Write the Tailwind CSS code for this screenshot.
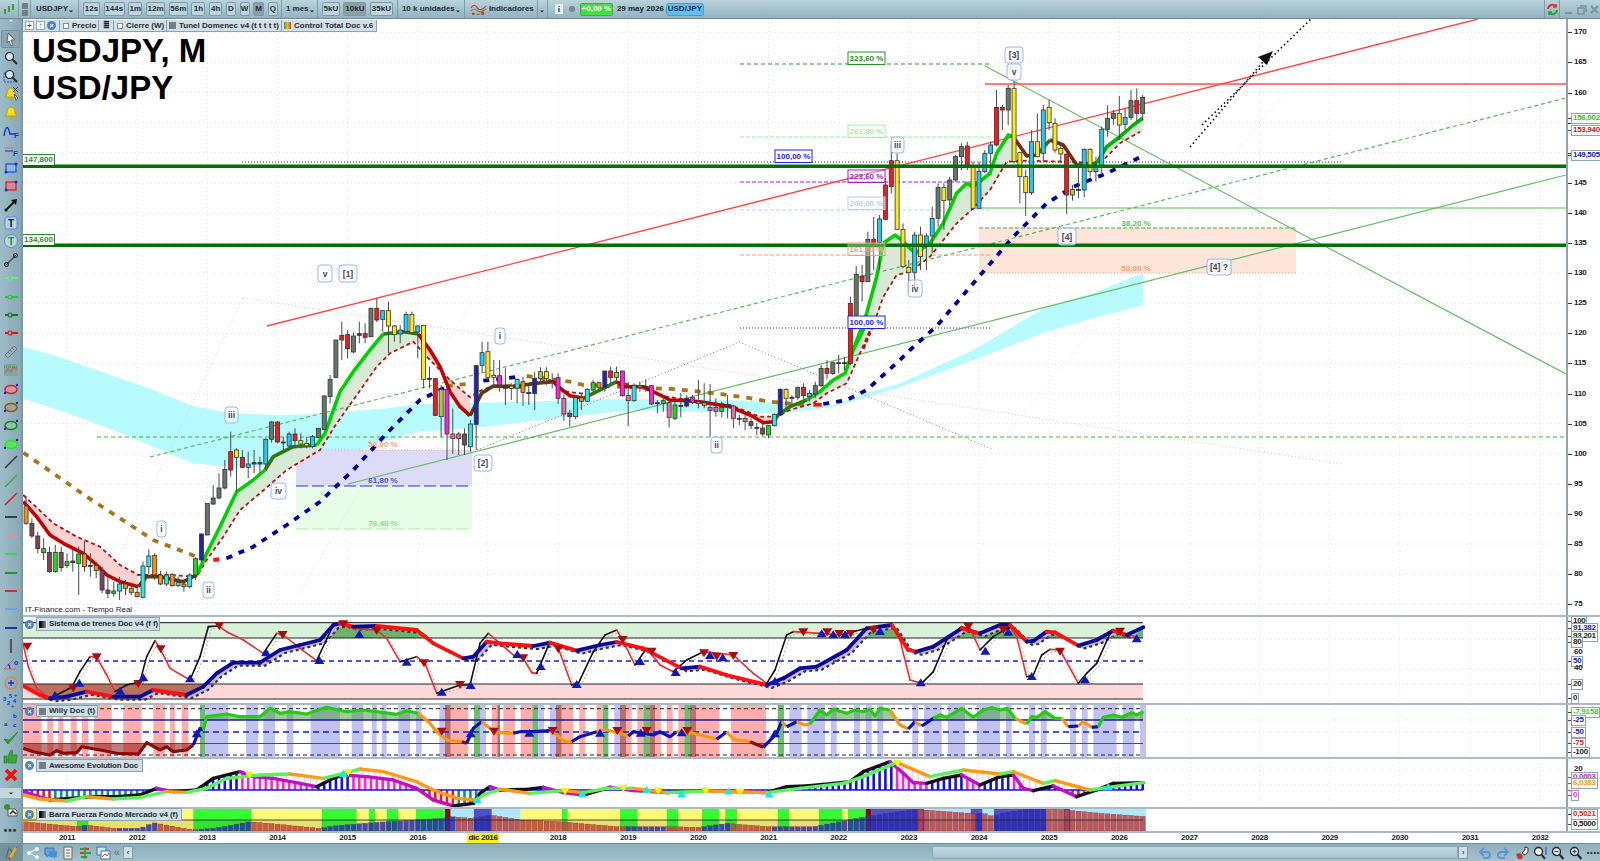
<!DOCTYPE html>
<html lang="es">
<head>
<meta charset="UTF-8">
<title>USDJPY, M</title>
<script src="https://cdn.jsdelivr.net/npm/@tailwindcss/browser@4"></script>
</head>
<body class="w-[1600px] h-[861px] overflow-hidden bg-white text-[#1f2d35] font-['Liberation_Sans',sans-serif] font-bold text-[8px] leading-none whitespace-nowrap">

<!-- top toolbar -->
<div class="h-[19px] flex items-center bg-gradient-to-b from-[#b9d3db] to-[#93b3c0] border-b border-[#6f8c99]">
  <div class="w-[19px] h-full flex items-center justify-center border-r border-[#7f9ba8]">
    <svg width="12" height="12" viewBox="0 0 12 12"><path d="M2 6v5M6 3v6M10 1v6" stroke="#3f9a3f" stroke-width="2"/></svg>
  </div>
  <div class="w-[12px] h-full flex flex-col items-center justify-center gap-[1px] border-r border-[#7f9ba8]">
    <span class="w-[6px] h-[6px] bg-[#6f8088]"></span><span class="w-[6px] h-[6px] bg-[#6f8088]"></span>
  </div>
  <div class="w-[48px] h-full flex items-center justify-between pl-[5px] pr-[4px] border-r border-[#7f9ba8]">USDJPY<span class="text-[7px]">⌄</span></div>
  <div class="flex items-center gap-[3.700px] ml-[4px] h-full">
    <span class="w-[17px] h-[14px] flex items-center justify-center rounded-[2px] border border-[#7f99a5] bg-[#bcd5dd]">12s</span>
    <span class="w-[21px] h-[14px] flex items-center justify-center rounded-[2px] border border-[#7f99a5] bg-[#bcd5dd]">144s</span>
    <span class="w-[14px] h-[14px] flex items-center justify-center rounded-[2px] border border-[#7f99a5] bg-[#bcd5dd]">1m</span>
    <span class="w-[19px] h-[14px] flex items-center justify-center rounded-[2px] border border-[#7f99a5] bg-[#bcd5dd]">12m</span>
    <span class="w-[19px] h-[14px] flex items-center justify-center rounded-[2px] border border-[#7f99a5] bg-[#bcd5dd]">56m</span>
    <span class="w-[14px] h-[14px] flex items-center justify-center rounded-[2px] border border-[#7f99a5] bg-[#bcd5dd]">1h</span>
    <span class="w-[13px] h-[14px] flex items-center justify-center rounded-[2px] border border-[#7f99a5] bg-[#bcd5dd]">4h</span>
    <span class="w-[10px] h-[14px] flex items-center justify-center rounded-[2px] border border-[#7f99a5] bg-[#bcd5dd]">D</span>
    <span class="w-[10px] h-[14px] flex items-center justify-center rounded-[2px] border border-[#7f99a5] bg-[#bcd5dd]">W</span>
    <span class="w-[11px] h-[14px] flex items-center justify-center rounded-[2px] border border-[#7f99a5] bg-[#8d9ea6]">M</span>
    <span class="w-[10px] h-[14px] flex items-center justify-center rounded-[2px] border border-[#7f99a5] bg-[#bcd5dd]">Q</span>
  </div>
  <div class="w-[37px] h-full ml-[3px] flex items-center justify-between pl-[4px] pr-[4px] border-x border-[#7f9ba8]">1 mes<span class="text-[7px]">⌄</span></div>
  <div class="flex items-center gap-[3.500px] ml-[4px] h-full">
    <span class="w-[18px] h-[14px] flex items-center justify-center rounded-[2px] border border-[#7f99a5] bg-[#bcd5dd]">5kU</span>
    <span class="w-[23px] h-[14px] flex items-center justify-center rounded-[2px] border border-[#7f99a5] bg-[#8d9ea6]">10kU</span>
    <span class="w-[23px] h-[14px] flex items-center justify-center rounded-[2px] border border-[#7f99a5] bg-[#bcd5dd]">35kU</span>
  </div>
  <div class="w-[68px] h-full ml-[4px] flex items-center justify-between pl-[4px] pr-[4px] border-x border-[#7f9ba8]">10 k unidades<span class="text-[7px]">⌄</span></div>
  <svg class="ml-[5px]" width="17" height="15" viewBox="0 0 18 15"><path d="M1 6c3-5 5-3 7 0s5 2 9-2" fill="none" stroke="#e03030" stroke-width="1.200"/><path d="M1 9c3-3 5-2 7 0s5 1 9-2" fill="none" stroke="#30b030" stroke-width="1.200"/><path d="M2 13v-2h3v2zM7 13v-1h3v1zM12 13v-3h3v3z" fill="#d03030"/></svg>
  <div class="w-[50px] pl-[2px]">Indicadores</div>
  <div class="w-[11px] h-full flex items-center justify-center border-x border-[#7f9ba8] text-[7px]">⌄</div>
  <svg class="ml-[7px]" width="8" height="10" viewBox="0 0 8 10"><path d="M0 0h8v10H0z" fill="#e4edf0"/><path d="M3 2h2v1H3zM3 4h2v4H3z" fill="#6a7c84"/></svg>
  <span class="ml-[6px] w-[6px] h-[6px] rounded-full bg-[#75878f]"></span>
  <span class="ml-[5px] w-[33px] h-[13px] flex items-center justify-center rounded-[2px] bg-[#45dc45] border border-[#3fb03f] text-white">+0,00 %</span>
  <span class="ml-[4px] w-[45px] text-[#1a242a]">29 may 2026</span>
  <span class="ml-[4px] w-[38px] h-[13px] flex items-center justify-center rounded-[3px] bg-[#66bdec] text-[#0e3560] border border-[#4a9ccf]">USD/JPY</span>
  <div class="ml-auto h-full flex items-center">
    <div class="w-[16px] h-full flex items-center justify-center border-x border-[#7f9ba8]">
      <svg width="13" height="13" viewBox="0 0 13 13"><path d="M2 6a4.500 4.500 0 0 1 8-2.500" fill="none" stroke="#e03030" stroke-width="2"/><path d="M10 1v3H7" fill="none" stroke="#e03030" stroke-width="1.500"/><path d="M11 7a4.500 4.500 0 0 1-8 2.500" fill="none" stroke="#20a040" stroke-width="2"/><path d="M3 12V9h3" fill="none" stroke="#20a040" stroke-width="1.500"/></svg>
    </div>
    <svg width="40" height="12" viewBox="0 0 40 12"><path d="M5 10h7" stroke="#7c919a" stroke-width="2"/><path d="M18 5h6v6h-6zM20 3h6v6" fill="none" stroke="#7c919a" stroke-width="1.500"/><path d="M31 3l7 7M38 3l-7 7" stroke="#7c919a" stroke-width="2"/></svg>
  </div>
</div>

<div class="flex h-[824px]">
  <!-- left drawing toolbar -->
  <div class="w-[23px] shrink-0 bg-gradient-to-r from-[#9dbcc8] to-[#87a8b5] border-r-2 border-[#7d98a4] flex flex-col items-center overflow-hidden">
    <div class="h-[11px] w-full text-center text-[7px] text-[#e8f2f5]">⌃</div>
    <div id="tools" class="h-[758px] overflow-hidden flex flex-col items-center w-full"></div>
    <div class="h-[10px] w-full shrink-0 bg-[#c1d6dd] text-center text-[7px]">⌄</div>
    <svg class="mt-[5px]" width="16" height="16" viewBox="0 0 16 16"><circle cx="4" cy="4" r="3" fill="#2e9a2e"/><path d="M5 6h7l2 2v5H5z" fill="#eef3f5" stroke="#555"/><path d="M7 11l3-3 3 3" fill="none" stroke="#222" stroke-width="1.500"/></svg>
    <span class="mt-[7px] text-[10px] font-bold tracking-[1px] text-[#333]">•••</span>
  </div>

  <div class="flex-1 flex flex-col">
    <!-- main chart -->
    <div class="h-[596px] flex">
      <div class="relative w-[1543px]">
        <svg id="main" width="1543" height="596" viewBox="23 19 1543 596" class="block"></svg>
        <div class="absolute left-0 top-[1px] h-[12px] flex bg-[#d2e0e5] border-r border-b border-[#8aa3ae]">
          <div class="w-[36px] flex items-center gap-[2px] pl-[2px]">
            <span class="w-[9px] h-[9px] flex items-center justify-center bg-white border border-[#9ab] text-[#e02020]">+</span>
            <span class="w-[9px] h-[9px] flex items-center justify-center bg-white border border-[#9ab] text-[#20a020]">↑</span>
            <span class="w-[9px] h-[9px] flex items-center justify-center rounded-full bg-[#4f7fc4] text-white text-[7px]">×</span>
          </div>
          <div class="w-[39px] flex items-center gap-[3px] pl-[3px] border-l border-[#8aa3ae]"><span class="w-[6px] h-[6px] shrink-0 border border-[#7d8f97] bg-white"></span>Precio</div>
          <div class="w-[15px] flex items-center justify-center border-l border-[#8aa3ae]">≣</div>
          <div class="w-[53px] flex items-center gap-[3px] pl-[3px] border-l border-[#8aa3ae]"><span class="w-[6px] h-[6px] shrink-0 border border-[#7d8f97] bg-white"></span>Cierre (W)</div>
          <div class="w-[115px] flex items-center gap-[3px] pl-[2px] border-l border-[#8aa3ae]"><span class="w-[7px] h-[7px] shrink-0 bg-[#6f8088]"></span>Tunel Domenec v4 (t t t t t)</div>
          <div class="w-[95px] flex items-center gap-[3px] pl-[2px] border-l border-[#8aa3ae]">
            <span class="w-[7px] h-[7px] shrink-0 bg-gradient-to-r from-[#30a030] via-[#e0c020] to-[#e03030]"></span>Control Total Doc v.6</div>
        </div>
        <div class="absolute left-[9px] top-[14px] font-bold text-[33px] leading-[36.500px] text-black">USDJPY, M<br>USD/JPY</div>
        <div class="absolute left-0 top-[135px] w-[32px] h-[11px] bg-white border-t border-r border-[#2a8a2a] text-[#1f8f1f] flex items-center justify-center">147,800</div>
        <div class="absolute left-0 top-[215px] w-[32px] h-[11px] bg-white border-t border-r border-[#2a8a2a] text-[#1f8f1f] flex items-center justify-center">134,600</div>
        <div class="absolute left-[2px] bottom-[1px] text-[8px] font-normal text-[#222]">IT-Finance.com - Tiempo Real</div>
      </div>
      <div id="ax0" class="relative w-[34px] border-l-2 border-[#8fa6b0]"></div>
    </div>

    <!-- Sistema de trenes -->
    <div class="h-[88px] flex border-t-2 border-[#a9bcc4]">
      <div class="relative w-[1543px]">
        <svg id="p1" width="1543" height="86" viewBox="23 617 1543 86" class="block"></svg>
        <div class="absolute left-0 top-0 h-[14px] flex items-center gap-[2px] pl-[2px]">
          <span class="w-[9px] h-[9px] flex items-center justify-center rounded-full bg-[#4f7fc4] text-white text-[7px]">×</span>
          <div class="h-[14px] w-[124px] flex items-center gap-[3px] pl-[2px] bg-[#d2e0e5] border border-[#8aa3ae] tracking-[-0.1px]"><span class="w-[7px] h-[7px] shrink-0 bg-gradient-to-r from-black to-[#8a9aa2]"></span>Sistema de trenes Doc v4 (f f)</div>
        </div>
      </div>
      <div id="ax1" class="relative w-[34px] border-l-2 border-[#8fa6b0]"></div>
    </div>

    <!-- Willy -->
    <div class="h-[54px] flex border-t-2 border-[#a9bcc4]">
      <div class="relative w-[1543px]">
        <svg id="p2" width="1543" height="52" viewBox="23 705 1543 52" class="block"></svg>
        <div class="absolute left-0 top-0 h-[12px] flex items-center gap-[2px] pl-[2px]">
          <span class="w-[9px] h-[9px] flex items-center justify-center rounded-full bg-[#4f7fc4] text-white text-[7px]">×</span>
          <div class="h-[12px] w-[62px] flex items-center gap-[3px] pl-[2px] bg-[#d2e0e5] border border-[#8aa3ae]"><span class="w-[7px] h-[7px] shrink-0 bg-[#6f8088]"></span>Willy Doc (t)</div>
        </div>
      </div>
      <div id="ax2" class="relative w-[34px] border-l-2 border-[#8fa6b0]"></div>
    </div>

    <!-- Awesome -->
    <div class="h-[50px] flex border-t-2 border-[#a9bcc4]">
      <div class="relative w-[1543px]">
        <svg id="p3" width="1543" height="48" viewBox="23 759 1543 48" class="block"></svg>
        <div class="absolute left-0 top-0 h-[13px] flex items-center gap-[2px] pl-[2px]">
          <span class="w-[9px] h-[9px] flex items-center justify-center rounded-full bg-[#4f7fc4] text-white text-[7px]">×</span>
          <div class="h-[13px] w-[107px] flex items-center gap-[3px] pl-[2px] bg-[#d2e0e5] border border-[#8aa3ae] tracking-[-0.2px]"><span class="w-[7px] h-[7px] shrink-0 bg-[#6f8088]"></span>Awesome Evolution Doc</div>
        </div>
      </div>
      <div id="ax3" class="relative w-[34px] border-l-2 border-[#8fa6b0]"></div>
    </div>

    <!-- Barra fuerza -->
    <div class="h-[24px] flex border-t-2 border-[#a9bcc4]">
      <div class="relative w-[1543px]">
        <svg id="p4" width="1543" height="22" viewBox="23 809 1543 22" class="block"></svg>
        <div class="absolute left-0 -top-[1px] h-[13px] flex items-center gap-[2px] pl-[2px]">
          <span class="w-[9px] h-[9px] flex items-center justify-center rounded-full bg-[#4f7fc4] text-white text-[7px]">×</span>
          <div class="h-[13px] w-[146px] flex items-center gap-[3px] pl-[2px] bg-[#d2e0e5] border border-[#8aa3ae] tracking-[-0.1px]"><span class="w-[7px] h-[7px] shrink-0 bg-gradient-to-r from-black to-[#8a9aa2]"></span>Barra Fuerza Fondo Mercado v4 (f)</div>
        </div>
      </div>
      <div id="ax4" class="relative w-[34px] border-l-2 border-[#8fa6b0]"></div>
    </div>

    <!-- time axis -->
    <div id="time" class="relative h-[12px] border-t-2 border-[#a9bcc4] tracking-[-0.3px]">
      <span class="absolute left-[444px] top-[0px] w-[32px] h-[10px] flex items-center justify-center bg-[#f7f01e] text-[#111]">dic 2016</span>
    </div>
  </div>
</div>

<!-- bottom bar -->
<div class="h-[18px] flex items-center bg-gradient-to-b from-[#8fb0bd] to-[#a4c2cd] border-t border-[#6f8c99]">
  <div class="w-[23px] h-full flex items-center justify-center bg-[#74929e]">
    <svg width="15" height="15" viewBox="0 0 15 15"><path d="M2 13L5 3l5 6 3-7" fill="none" stroke="#5a6a70" stroke-width="1.200"/><path d="M6 13l6-10" stroke="#e8b010" stroke-width="2.500"/><path d="M5 14l1-1" stroke="#d02020" stroke-width="2"/></svg>
  </div>
  <svg class="ml-[3px]" width="14" height="14" viewBox="0 0 14 14"><path d="M3 7l8-4M3 7l8 4" stroke="#f4f8fa" stroke-width="1.200"/><circle cx="3" cy="7" r="2" fill="#f4f8fa"/><circle cx="11" cy="3" r="2" fill="#f4f8fa"/><circle cx="11" cy="11" r="2" fill="#f4f8fa"/></svg>
  <svg class="ml-[4px]" width="14" height="14" viewBox="0 0 14 14"><path d="M1 2h9v7H5l-2 2V9H1z" fill="#6f9ed8" stroke="#3d6fb0"/><path d="M5 5h8v6h-2v2l-2-2H5z" fill="#3f8fe0"/></svg>
  <svg class="ml-[3px]" width="14" height="14" viewBox="0 0 14 14"><path d="M3 1h8v12H3z" fill="#f2f2f2" stroke="#666"/><path d="M5 4h4M5 7h4" stroke="#d03030"/><path d="M5 10h4" stroke="#30a030"/></svg>
  <svg class="ml-[3px]" width="14" height="14" viewBox="0 0 14 14"><path d="M7 1v12" stroke="#555"/><path d="M2 2h6v2H2zM6 6h7v2H6zM3 10h6v2H3z" fill="#2ea02e"/><path d="M8 2h3v2H8zM2 6h4v2H2z" fill="#e03030"/></svg>
  <svg class="ml-[4px]" width="15" height="14" viewBox="0 0 15 14"><path d="M1 1h9v8H1z" fill="#cfe3f5" stroke="#3d6fb0"/><path d="M5 5h9v8H5z" fill="#fff" stroke="#3d6fb0"/><path d="M6 11l3-3 2 2 2-3" fill="none" stroke="#e03030"/></svg>
  <span class="ml-[3px] text-[11px] font-normal text-[#5a7480]">«</span>
  <span class="ml-[3px] w-[10px] h-[13px] flex items-center justify-center bg-[#cfe0e6] border border-[#7f99a5] text-[7px]">‹</span>
  <div class="w-[802px] h-[13px] bg-gradient-to-b from-[#8caebb] to-[#9fbfca]"></div>
  <div class="w-[528px] h-[13px] rounded-[2px] bg-gradient-to-b from-[#c3dae1] to-[#a6c4ce] border border-[#8aa7b2]"></div>
  <span class="w-[10px] h-[13px] flex items-center justify-center bg-[#cfe0e6] border border-[#7f99a5] text-[7px]">›</span>
  <svg class="ml-[10px]" width="14" height="14" viewBox="0 0 14 14"><path d="M3 6h6a3 3 0 0 1 0 6H5" fill="none" stroke="#5b95d8" stroke-width="2"/><path d="M6 2L2 6l4 4" fill="none" stroke="#5b95d8" stroke-width="2"/></svg>
  <svg class="ml-[4px]" width="14" height="14" viewBox="0 0 14 14"><path d="M11 6H5a3 3 0 0 0 0 6h4" fill="none" stroke="#5b95d8" stroke-width="2"/><path d="M8 2l4 4-4 4" fill="none" stroke="#5b95d8" stroke-width="2"/></svg>
  <svg class="ml-[5px]" width="14" height="14" viewBox="0 0 14 14"><path d="M1 8l4-1 3 3-1 3H3z" fill="#d03030"/><path d="M7 7l3-3V1l3 1v4l-3 3z" fill="#fff" stroke="#333"/></svg>
  <svg class="ml-[4px]" width="15" height="14" viewBox="0 0 15 14"><circle cx="5.500" cy="5.500" r="4" fill="#eef4f7" stroke="#222" stroke-width="1.300"/><path d="M8.500 8.500L12 13" stroke="#222" stroke-width="2"/><path d="M13 1v8" stroke="#2040c0"/></svg>
  <svg class="ml-[3px]" width="14" height="14" viewBox="0 0 14 14"><circle cx="5.500" cy="5.500" r="4" fill="#eef4f7" stroke="#222" stroke-width="1.300"/><path d="M8.500 8.500L12.500 13" stroke="#222" stroke-width="2"/><path d="M3.500 5.500h4" stroke="#2040c0" stroke-width="1.300"/></svg>
  <svg class="ml-[4px]" width="14" height="14" viewBox="0 0 14 14"><circle cx="5.500" cy="5.500" r="4" fill="#eef4f7" stroke="#222" stroke-width="1.300"/><path d="M8.500 8.500L12.500 13" stroke="#222" stroke-width="2"/><path d="M3.500 5.500h4M5.500 3.500v4" stroke="#2040c0" stroke-width="1.300"/></svg>
  <span class="ml-[4px] text-[8px] tracking-[0.5px] text-[#333]">••••</span>
</div>

<script>
const at = (x0, y0, f) => { const r = []; for (let i = 0; i < f.length; i += 2) r.push([x0 + f[i] / 3, y0 + f[i + 1] / 3]); return r };
const Z7 = f => at(20, 260, f), Z11 = f => at(500, 330, f), Z8 = f => at(800, 30, f);
const Z6 = f => at(0, 600, f), Z9 = f => at(500, 600, f), Z10 = f => at(1000, 600, f);
const pts = p => p.map(q => q[0].toFixed(1) + ',' + q[1].toFixed(1)).join(' ');
const line = (p, c, w, dash, extra) => `<polyline points="${pts(p)}" fill="none" stroke="${c}" stroke-width="${w}" stroke-linejoin="round" ${dash ? `stroke-dasharray="${dash}"` : ''} ${extra || ''}/>`;
const poly = (p, c, extra) => `<polygon points="${pts(p)}" fill="${c}" ${extra || ''}/>`;
const rect = (x, y, w, h, c, extra) => `<rect x="${x}" y="${y}" width="${w}" height="${h}" fill="${c}" ${extra || ''}/>`;
const seg = (x1, y1, x2, y2, c, w, dash) => line([[x1, y1], [x2, y2]], c, w, dash);
const tx = m => 67 + 5.846 * m;
const yearX = y => 67 + 70.15 * (y - 2011);
const py = p => 32.3 + (170 - p) * 6.02;
const FONT = 'font-family="Liberation Sans, sans-serif"';

function grid(top, bottom, hs) {
  let s = '';
  for (let y = 2011; y <= 2032; y++) s += seg(yearX(y), top, yearX(y), bottom, '#dfe3e5', 1, '1 3');
  hs.forEach(h => s += seg(23, h, 1566, h, '#dfe3e5', 1, '1 3'));
  return s;
}

// candles: wick top, body top, body bottom, wick bottom, colour (reference crops, y in 3x units)
const COL = { g: '#66766a', m: '#7c4658', y: '#ffe81a', c: '#27c8ee', r: '#f01c1c', G: '#22d822', o: '#f09412', p: '#ee6aa6', M: '#ff22d4', b: '#2424a8', d: '#3c3c3c', O: '#a4cc44', a: '#2ee6e6' };
const c7 = [[710,738,790,795,'o'],[775,790,828,835,'m'],[815,828,866,880,'m'],[835,866,878,900,'G'],[860,877,935,938,'m'],[855,877,935,938,'G'],[860,877,923,935,'m'],[880,905,917,925,'G'],[870,903,908,935,'d'],[860,882,910,1005,'G'],[842,882,920,935,'o'],[880,916,918,950,'d'],[905,917,932,955,'o'],[920,932,990,1000,'m'],[945,990,1000,1015,'m'],[965,993,1000,1010,'G'],[950,972,993,1020,'a'],[960,972,985,1005,'o'],[975,985,997,1005,'o'],[985,997,1010,1012,'o'],[905,918,1012,1015,'a'],[868,888,920,950,'a'],[880,886,945,960,'o'],[932,945,972,975,'o'],[935,945,972,978,'a'],[940,943,977,980,'o'],[950,968,977,982,'a'],[960,972,980,995,'o'],[940,945,980,985,'a'],[892,896,945,960,'G'],[820,822,900,905,'b'],[730,730,825,825,'g'],[675,714,732,735,'g'],[640,684,714,718,'g'],[600,628,684,688,'g'],[515,575,630,650,'r'],[565,570,592,695,'y'],[570,592,622,625,'r'],[575,612,622,655,'c'],[570,608,612,640,'d'],[590,608,612,640,'d'],[535,538,612,625,'c'],[483,486,538,548,'g'],[483,486,546,550,'r'],[530,546,548,570,'d'],[515,522,558,570,'c'],[505,522,542,565,'r'],[520,542,552,565,'y'],[530,550,558,565,'y'],[525,530,560,565,'c'],[505,505,532,535,'g'],[405,408,508,510,'g'],[345,358,410,430,'g'],[240,240,352,355,'g'],[185,226,240,300,'r'],[210,224,266,295,'r'],[218,228,276,280,'g'],[185,221,226,250,'d'],[190,221,232,250,'r'],[143,145,230,232,'g'],[115,145,180,186,'r'],[150,152,178,215,'c'],[125,152,198,280,'y'],[195,198,224,245,'y'],[195,210,222,250,'c'],[155,163,215,220,'c'],[155,163,218,222,'y'],[195,198,216,295,'c'],[196,196,358,385,'y'],[320,355,358,385,'d'],[355,356,466,468,'r'],[375,388,470,530,'O'],[375,388,522,600,'M'],[445,522,535,582,'p'],[515,522,535,585,'p'],[505,522,555,585,'m'],[480,492,560,575,'a'],[315,317,493,570,'b'],[245,278,316,340,'c'],[245,275,352,360,'y'],[300,346,352,385,'y'],[300,347,375,395,'M'],[325,376,385,435,'d'],[370,378,385,420,'y'],[355,358,385,430,'a']];
const c11 = [[140,155,187,228,'o'],[165,187,191,225,'d'],[125,145,191,240,'b'],[112,125,145,160,'O'],[112,125,145,165,'y'],[130,152,155,175,'d'],[130,143,205,222,'M'],[195,205,252,272,'p'],[240,250,260,290,'m'],[195,203,260,268,'a'],[190,203,214,240,'o'],[175,178,214,216,'a'],[150,158,180,190,'G'],[155,158,172,185,'o'],[123,123,172,185,'b'],[110,123,142,165,'r'],[110,127,142,155,'O'],[123,123,197,200,'M'],[155,196,212,288,'p'],[160,167,212,215,'a'],[155,167,173,185,'o'],[148,170,173,185,'b'],[165,167,222,225,'M'],[210,218,220,250,'d'],[195,212,220,245,'G'],[210,218,262,292,'p'],[215,225,265,270,'G'],[190,226,228,262,'d'],[195,205,228,232,'b'],[195,203,217,222,'M'],[150,214,220,235,'p'],[160,218,226,235,'o'],[162,232,241,320,'p'],[205,232,244,260,'p'],[215,232,244,262,'G'],[195,224,230,265,'d'],[225,228,265,295,'p'],[255,265,267,285,'d'],[255,265,275,300,'p'],[265,275,287,298,'m'],[278,292,294,315,'d'],[280,294,312,318,'m'],[285,287,315,325,'G'],[250,253,287,290,'a'],[175,178,255,257,'b'],[175,178,205,240,'y'],[195,202,204,225,'d'],[170,172,202,210,'g'],[160,172,197,210,'r'],[180,190,200,215,'c'],[155,167,192,205,'g'],[105,115,167,170,'g'],[90,115,130,145,'r'],[95,98,130,135,'g'],[75,98,100,130,'d'],[80,98,100,120,'d']];
const c8 = [[800,820,1000,1005,'r'],[708,733,855,870,'g'],[705,738,755,815,'r'],[605,628,755,755,'g'],[560,628,640,720,'r'],[555,567,637,720,'c'],[445,465,568,570,'r'],[335,392,470,490,'r'],[370,392,598,600,'y'],[580,598,710,715,'y'],[690,712,727,790,'y'],[605,615,727,770,'c'],[590,615,680,720,'y'],[610,618,648,720,'c'],[530,565,618,670,'c'],[460,472,565,590,'g'],[460,472,512,600,'y'],[440,450,510,525,'g'],[375,380,450,455,'g'],[340,350,380,420,'g'],[335,348,405,420,'r'],[395,410,535,540,'y'],[395,424,535,535,'c'],[360,370,425,430,'c'],[335,345,370,405,'c'],[180,232,345,350,'r'],[225,232,240,300,'r'],[165,175,240,285,'g'],[155,175,395,400,'y'],[365,368,440,520,'y'],[420,440,488,558,'y'],[300,335,488,495,'c'],[250,335,380,382,'y'],[225,240,370,395,'c'],[210,232,278,300,'y'],[265,280,360,368,'y'],[335,355,372,400,'y'],[372,372,495,552,'r'],[465,478,495,512,'O'],[410,478,480,505,'d'],[355,358,480,502,'c'],[355,358,425,440,'y'],[380,412,425,455,'c'],[290,298,410,430,'c'],[225,265,298,320,'g'],[240,250,265,285,'g'],[198,250,285,330,'y'],[235,262,283,300,'c'],[180,212,262,270,'g'],[175,212,250,275,'r'],[195,202,250,272,'g']];
const candles = [...c7.map(c => [260, c]), ...c11.map(c => [330, c]), ...c8.map(c => [30, c])];
let candleSvg = '';
candles.forEach(([y0, c], i) => {
  const m = i - 7, x = tx(m), Y = v => y0 + v / 3;
  candleSvg += seg(x, Y(c[0]), x, Y(c[3]), '#4a4a4a', 1);
  candleSvg += rect(x - 2, Y(c[1]), 4, Math.max(Y(c[2]) - Y(c[1]), 1), COL[c[4]], 'stroke="#333" stroke-width="0.8"');
});

// moving averages
const maA1 = Z7([10,725,50,770,90,825,130,850,190,880,230,915,260,945,300,965,355,980]);
const maA2 = Z7([355,980,380,950,420,950,490,965,530,945]);
const maA3 = Z7([530,945,560,880,600,800,650,695,700,660,735,630]);
const maA4 = Z7([735,630,760,590,820,560,890,555]);
const maA5 = Z7([890,555,915,520,960,395,1000,335,1050,270,1090,222]);
const maA6 = Z7([1090,222,1150,215,1195,222]);
const maA7 = Z7([1195,222,1230,270,1260,320,1290,395,1320,440,1350,467]);
const maA8 = Z7([1350,467,1385,400,1420,378,1500,380]).concat(Z11([50,168,110,160,160,155]));
const maB1 = Z11([160,155,180,175,210,197,250,205]);
const maB2 = Z11([250,205,280,190,350,155]);
const maB3 = Z11([350,155,370,170,430,170,470,190,510,210,560,212,600,215,690,230,760,260,790,278,820,275]);
const maB4 = Z11([820,275,835,255,870,230,920,210]);
const maB5 = Z11([920,210,960,185,1000,150,1035,130,1060,60,1090,0]).concat(Z8([160,960,200,850,230,740,250,640]));
const maB6 = Z8([250,640,285,615,305,630,345,670]);
const maB7 = Z8([345,670,390,640,430,580,470,490,500,460,520,470,570,430,590,370,625,315,640,320]);
const maB8 = Z8([640,320,680,378,710,375]);
const maB9 = Z8([710,375,750,330]);
const maB10 = Z8([750,330,790,345,830,405]);
const maB11 = Z8([830,405,890,400]);
const maB12 = Z8([890,400,920,350,960,320,1000,285,1028,265]);
const sig = Z7([10,705,100,790,170,830,240,860,300,915,355,945,440,945,530,950,560,900,610,830,660,750,720,700,800,630,900,570,950,490,1000,420,1070,320,1110,280,1180,245,1220,290,1290,360,1350,412,1385,390,1420,378])
  .concat(Z11([60,165,150,150,200,185,240,190,280,190,350,155,420,172,500,200,600,215,690,225,780,260,830,260,870,240,940,220,980,190,1040,160,1080,70,1110,0]))
  .concat(Z8([190,960,215,900,250,800,290,735,330,725,390,680,470,580,520,535,570,480,620,395,680,392,800,395,900,400,960,340,1020,305]));
const GREENFILL = '#d6ead6', PINKFILL = '#fbd2d2';
const between = (a, b, c) => poly(a.concat(b.slice().reverse()), c);

let mainSvg = grid(19, 615, Array.from({ length: 20 }, (_, i) => py(170 - i * 5)));
// cyan band
mainSvg += poly(
  Z7([-9,255,100,285,200,320,300,355,400,390,460,415,520,438,620,458,760,465,900,462,1100,445,1200,432,1500,425])
  .concat(Z11([300,208,600,208,830,215,1000,226,1100,190,1200,160]))
  .concat(Z8([520,960,740,830,880,790,1030,728,1030,825,880,865,740,905,600,960]))
  .concat(Z11([1200,172,1100,202,1000,230,850,250,600,245,400,240,200,262,0,285]))
  .concat(Z7([1360,505,1200,515,1100,540,1000,580,900,605,760,620,620,620,520,610,400,560,300,518,200,480,100,445,-9,410])), '#b8fbff');
// fibo boxes
mainSvg += rect(979, 228, 317, 45, '#fde5da');
mainSvg += rect(296, 450, 176, 36, '#dcdcf8') + rect(296, 486, 176, 43, '#e8fde8');
mainSvg += seg(979, 228, 1296, 228, '#40b040', 1, '4 2') + seg(979, 273, 1296, 273, '#f8a080', 1, '1 2');
mainSvg += seg(296, 450, 472, 450, '#f8a080', 1, '1 2') + seg(296, 486, 472, 486, '#3030d0', 1, '12 4') + seg(296, 529, 472, 529, '#a0f0a0', 1.2, '12 4');
// long fibo levels
mainSvg += seg(740, 64, 990, 64, '#2f9a2f', 1.2, '4 3') + seg(740, 137, 990, 137, '#90ee90', 1, '4 2') + seg(740, 182, 990, 182, '#a020f0', 1, '4 2')
  + seg(740, 210, 990, 210, '#b8d0ff', 1, '4 2') + seg(740, 255, 990, 255, '#ff9966', 1, '4 2') + seg(740, 328, 990, 328, '#2020ff', 1, '1 2')
  + seg(242, 162, 1342, 162, '#2020d0', 1, '1 2');
// gray dotted waves
const grayDots = [[[243,298],[1342,464],'#c8c8c8'],[[243,298],[117,560],'#d8d8d8'],[[297,597],[472,300],'#e0e0e0'],[[477,450],[739,342],'#707070'],[[739,342],[992,449],'#808080'],[[980,467],[1286,92],'#e4e4e4']];
grayDots.forEach(d => mainSvg += seg(d[0][0], d[0][1], d[1][0], d[1][1], d[2], 1, '1 2.5'));
// fills between the averages and their signal
mainSvg += between(maA1, Z7([10,705,100,790,170,830,240,860,300,915,355,945]), PINKFILL);
mainSvg += between(maA3.concat(maA4, maA5, maA6), Z7([530,950,560,900,610,830,660,750,720,700,800,630,900,570,950,490,1000,420,1070,320,1110,280,1195,245]), GREENFILL);
mainSvg += between(maA7, Z7([1195,245,1220,290,1290,360,1350,412]), PINKFILL);
mainSvg += between(maB3, Z11([350,155,420,172,500,200,600,215,690,225,780,260,820,262]), PINKFILL);
mainSvg += between(maB4.concat(maB5, maB6, maB7), Z11([820,262,870,240,940,220,980,190,1040,160,1080,70,1110,0]).concat(Z8([190,960,215,900,250,800,290,735,330,725,390,680,470,580,520,535,570,480,620,395,640,390])), GREENFILL);
mainSvg += between(maB12, Z8([890,400,960,340,1028,305]), GREENFILL);
// trend lines
mainSvg += seg(267, 326, 1478, 19, '#ff4444', 1.3);
mainSvg += seg(150, 457, 1566, 98, '#55bb55', 1.2, '4 3');
mainSvg += seg(348, 484, 1566, 175, '#66bb66', 1.2);
mainSvg += seg(985, 66, 1566, 374, '#66bb66', 1.2);
mainSvg += seg(980, 208, 1566, 208, '#55bb55', 1);
mainSvg += seg(97, 437, 1566, 437, '#33bb33', 1, '4 3');
mainSvg += seg(985, 84, 1566, 84, '#ff5050', 1.4);
// long-term dashed average
const blue = '#00009a', brown = '#a8741a', DW = 3.8, DASH = '6 7';
mainSvg += line(Z7([10,578,100,640,200,710,300,775,400,840,530,890]), brown, DW, DASH);
mainSvg += line(Z7([580,900,620,895]), '#ff1010', DW, DASH);
mainSvg += line(Z7([620,895,700,860,800,795,900,725,1000,630,1100,520,1200,420,1280,380]), blue, DW, DASH);
mainSvg += line(Z7([1280,378,1340,372]), brown, DW, DASH);
mainSvg += line(Z7([1390,362,1500,350]), blue, DW, DASH);
mainSvg += line(Z11([80,138,210,155,250,165,530,178,570,182,600,185,670,193,740,203,810,215,880,222,930,225]), brown, DW, DASH);
mainSvg += line(Z11([940,224,965,224]), '#ff1010', DW);
mainSvg += line(Z11([970,222,1040,210,1100,180,1150,135,1200,90]).concat(Z8([330,960,410,888,520,760,640,620,740,520,820,470,920,430,1020,382])), blue, DW, DASH);
// signal dashed
mainSvg += line(sig, '#b01414', 1.8, '4 3');
// thick average pieces
const THICK = 3.6, R = '#c00000', G1 = '#00d000', DG = '#2f7a10', DK = '#5a3a10';
[[maA1,R],[maA2,DK],[maA3,G1],[maA4,DG],[maA5,G1],[maA6,DG],[maA7,R],[maA8,DK],[maB1,R],[maB2,DG],[maB3,R],[maB4,DG],[maB5,G1],[maB6,G1],[maB7,G1],[maB8,'#7a2a10'],[maB9,DG],[maB10,'#7a2a10'],[maB11,DG],[maB12,'#00b000']].forEach(a => mainSvg += line(a[0], a[1], THICK));
mainSvg += candleSvg;
// support levels
mainSvg += rect(23, 164.5, 1543, 3.5, '#007000') + rect(23, 243.5, 1543, 3.5, '#007000');
// target arrow
mainSvg += seg(1190, 147, 1268, 56, '#111', 1.6, '1.6 2.8') + seg(1202, 125, 1312, 18, '#111', 1.6, '1.6 2.8');
mainSvg += poly([[1273,51],[1258,57],[1267,65]], '#111');
// fibo + wave labels
const fib = (x, y, t, c, bg) => rect(x, y, 37, 12.5, bg || 'none', `stroke="${c}" stroke-width="1"`) + `<text x="${x + 18.5}" y="${y + 9.2}" text-anchor="middle" ${FONT} font-size="8" font-weight="bold" fill="${c}">${t}</text>`;
mainSvg += fib(848, 52, '323,60 %', '#2a8a2a', '#fff') + fib(848, 125, '261,80 %', '#a0f0a0', '#ffffff80') + fib(848, 170, '223,60 %', '#a020c0', '#ffffff50');
mainSvg += fib(848, 197, '200,00 %', '#b8ccf5', '#ffffff80') + fib(848, 243, '161,80 %', '#ff9966', '#ffffff50') + fib(848, 316, '100,00 %', '#1c1cf0', '#fff') + fib(775, 150, '100,00 %', '#1c1cf0', '#fff');
const note = (x, y, t, c) => `<text x="${x}" y="${y}" text-anchor="middle" ${FONT} font-size="8" font-weight="bold" fill="${c}">${t}</text>`;
mainSvg += note(1136, 226, '38,20 %', '#60c060') + note(1136, 271, '50,00 %', '#ff9a66') + note(383, 447, '50,00 %', '#ffa070') + note(383, 483, '61,80 %', '#5050d8') + note(383, 526, '76,40 %', '#80e080');
const wave = (x1, x2, y1, y2, t) => rect(x1, y1, x2 - x1, y2 - y1, '#ffffffa0', 'rx="3" stroke="#94b6ff" stroke-width="1"') + `<text x="${(x1 + x2) / 2}" y="${(y1 + y2) / 2 + 3}" text-anchor="middle" ${FONT} font-size="8.5" fill="#445">${t}</text>`;
[[318,332,265,282,'v'],[339,357,265,282,'[1]'],[225,238,407,423,'iii'],[157,166,521,537,'i'],[203,214,582,598,'ii'],[271,286,483,499,'iv'],[474,492,455,471,'[2]'],[495,505,328,344,'i'],[711,722,437,453,'ii'],[1005,1023,47,63,'[3]'],[1007,1021,64,80,'v'],[891,904,137,153,'iii'],[908,922,280,297,'iv'],[1058,1076,228,245,'[4]'],[1207,1231,259,275,'[4] ?']].forEach(w => mainSvg += wave(...w));
document.getElementById('main').innerHTML = mainSvg;

// ---- Sistema de trenes
const tri = (x, y, c, up, s) => { s = s || 5; return poly(up ? [[x, y - s * .8], [x - s, y + s * .8], [x + s, y + s * .8]] : [[x, y + s * .8], [x - s, y - s * .8], [x + s, y - s * .8]], c) };
const bySlope = (p, up, down, w) => { let s = ''; for (let i = 1; i < p.length; i++) s += `<line x1="${p[i-1][0]}" y1="${p[i-1][1]}" x2="${p[i][0]}" y2="${p[i][1]}" stroke="${p[i][1] <= p[i-1][1] ? up : down}" stroke-width="${w}" stroke-linecap="round"/>`; return s };
const thin = Z6([70,135,85,200,110,265,150,295,180,280,215,262,240,215,270,170,290,172,320,225,345,275,380,255,420,245,440,170,465,122,480,145,510,205,570,240,600,170,625,80,655,78,680,95,730,120,790,160,830,100,850,105,900,145,950,182,1000,75,1020,68,1060,85,1130,90,1160,115,1200,185,1250,170,1275,190,1310,280,1380,255,1410,255,1440,130,1465,100,1500,130])
  .concat(Z9([40,165,70,175,95,218,110,220,150,125,175,145,215,255,235,250,280,155,315,105,350,90,370,125,405,195,440,145,480,195,520,215,560,180,610,155,700,165,760,220,800,250,825,210,860,105,880,95,960,100,1020,105,1100,85,1175,75,1200,120,1230,240,1265,250,1300,215,1340,120,1385,80,1410,85,1440,150,1480,110]))
  .concat(Z10([30,80,50,110,80,230,100,225,125,165,150,148,180,150,235,250,260,220,290,190,335,90,360,95,410,112]));
const thick = Z6([70,258,120,285,150,295,200,290,260,275,340,290,420,290,460,270,560,285,610,260,650,220,700,188,780,188,840,150,900,135,960,120,1000,75,1020,70,1060,80,1130,78,1250,90,1300,130,1390,175,1420,170,1460,125,1500,130])
  .concat(Z9([100,138,150,128,230,152,300,135,350,126,430,145,545,205,600,200,680,225,800,255,850,235,900,205,950,200,1040,150,1100,85,1175,75,1225,150,1250,155,1300,140,1385,85,1440,100,1500,75]))
  .concat(Z10([30,75,80,125,100,123,140,95,165,97,235,137,290,120,340,92,380,105,430,82]));
const shifted = thick.map(q => [q[0] + 5, q[1] + 3]).filter(q => q[0] < 1143);
let p1 = rect(23, 622.7, 1120, 15.3, '#d9f2d9') + rect(23, 684, 1120, 15, '#ffd9d9') + grid(617, 703, [639, 669, 684]);
p1 += '<clipPath id="topz"><rect x="23" y="620" width="1120" height="18"/></clipPath><clipPath id="botz"><rect x="23" y="684" width="1120" height="16"/></clipPath>';
p1 += poly([[23, 638], ...thick, [1143, 638]], '#6cb26c', 'clip-path="url(#topz)"') + poly([[23, 684], ...thick, [1143, 684]], '#b9705f', 'clip-path="url(#botz)"');
p1 += between(thick, shifted, '#cdb8ee');
p1 += seg(23, 622.7, 1143, 622.7, '#111', 1) + seg(23, 638, 1143, 638, '#222', 1) + seg(23, 684, 1143, 684, '#222', 1) + seg(23, 699, 1143, 699, '#222', 1);
p1 += seg(23, 661, 1143, 661, '#1c1cd0', 1.6, '5 4');
p1 += line(shifted, '#333', 2.2, '3 3');
p1 += line(thin.map(q => [q[0] + 3, q[1] + 2]), '#999', 0.8, '2 2');
p1 += bySlope(thin, '#111', '#e23030', 1.6) + bySlope(thick, '#0a0a96', '#ff1010', 3.8);
Z6([82,140,220,265,290,172,415,252,482,148,658,78,848,105,1030,73,1130,92,1272,190,1380,255]).concat(Z9([70,175,175,148,368,120,455,155,612,160,650,170,700,168,910,97,982,97,1018,102,1052,102,1120,90,1405,80])).concat(Z10([10,90,180,155,360,95])).forEach(q => p1 += tri(q[0], q[1], '#a80e0e', false, 5));
Z6([165,285,238,248,360,272,430,232,570,235,798,157,958,180,1078,102,1220,185,1325,275,1412,255]).concat(Z9([52,162,122,198,230,252,420,183,527,216,630,165,668,172,825,243,965,100,1000,103,1035,103,1140,93,1262,247,1456,152])).concat(Z10([25,95,95,228,255,238,410,115])).forEach(q => p1 += tri(q[0], q[1], '#1018b8', true, 5));
document.getElementById('p1').innerHTML = p1;

// ---- Willy
const stripes = [];
const addS = (x0, c, f) => { for (let i = 0; i < f.length; i += 2) stripes.push([x0 + f[i] / 3, (f[i + 1] - f[i]) / 3, c]) };
const PK = '#ffadad', BL = '#c2c2f2', GN = '#72bb72', DR = '#bb7070';
addS(0, PK, [70,125,142,160,175,190,212,230,245,265,282,335,370,425,460,495,510,525,545,565,1352,1405,1475,1492]);
addS(0, GN, [600,615,1422,1440]);
addS(0, BL, [615,685,738,775,790,825,860,880,932,1020,1055,1090,1115,1130,1145,1160,1195,1230,1248,1265,1318,1335,1440,1458]);
addS(0, DR, [1335,1352,1492,1500]);
addS(500, PK, [10,45,62,97,185,220,238,256,290,308,378,395,412,430,465,483,500,518,535,553,588,658,693,798]);
addS(500, GN, [97,115,308,325,430,448,553,570,833,852]);
addS(500, BL, [115,132,150,168,343,360,868,905,922,975,992,1010,1062,1080,1097,1115,1132,1150,1237,1255,1272,1325,1343,1395,1430,1500]);
addS(500, DR, [168,185,360,378,448,465,570,588]);
addS(1000, BL, [18,35,87,105,122,140,210,228,245,263,280,350,368,403,420,438]);
let p2 = grid(705, 757, [720, 732]);
stripes.forEach(s => p2 += rect(s[0].toFixed(1), 705, s[1].toFixed(1), 52, s[2]));
const runs = [
  ['#8a0a0a', Z6([70,445,100,455,150,465,170,452,190,460,230,458,245,440,270,445,300,450,350,460,415,462,440,428,480,450,500,440,520,455,560,450,580,435])],
  ['#0a10c0', Z6([580,435,600,385,610,390])],
  ['#22cc10', Z6([610,390,620,350,680,342,720,350,780,350,810,325,840,340,870,335,920,342,980,322,1040,335,1090,330,1130,335,1190,343,1220,332,1255,340])],
  ['#f59a10', Z6([1255,340,1290,370,1310,395,1340,420,1385,425])],
  ['#8a0a0a', Z6([1385,425,1400,430])],
  ['#0a10c0', Z6([1400,430,1420,385,1445,365])],
  ['#f59a10', Z6([1445,365,1480,392,1500,398]).concat(Z9([0,398,40,400]))],
  ['#0a10c0', Z9([40,400,60,395,100,395,150,392])],
  ['#f59a10', Z9([150,392,170,405,195,425,215,425])],
  ['#0a10c0', Z9([215,425,240,410,290,395])],
  ['#f59a10', Z9([290,395,320,390,360,400,385,408])],
  ['#0a10c0', Z9([385,408,400,395,460,405,480,395,510,410,530,395])],
  ['#f59a10', Z9([530,395,580,400,650,418])],
  ['#0a10c0', Z9([650,418,680,395])],
  ['#f59a10', Z9([680,395,700,418,750,425])],
  ['#8a0a0a', Z9([750,425,790,442])],
  ['#0a10c0', Z9([790,442,830,400,845,365])],
  ['#f59a10', Z9([845,365,860,380])],
  ['#0a10c0', Z9([860,380,890,365])],
  ['#f59a10', Z9([890,365,915,375,930,372])],
  ['#22cc10', Z9([930,372,960,330,980,345,1000,328,1040,340,1065,330,1090,335,1110,328,1125,348,1140,325,1170,330])],
  ['#f59a10', Z9([1170,330,1200,375,1225,387])],
  ['#0a10c0', Z9([1225,387,1245,365])],
  ['#f59a10', Z9([1245,365,1265,378])],
  ['#0a10c0', Z9([1265,378,1300,355])],
  ['#22cc10', Z9([1300,355,1320,345,1340,352,1385,325,1420,352,1450,330,1475,323,1500,330]).concat(Z10([22,325,45,355]))],
  ['#f59a10', Z10([45,355,80,372])],
  ['#22cc10', Z10([80,372,95,350,110,352,135,335,165,355,185,355])],
  ['#f59a10', Z10([185,355,205,380])],
  ['#0a10c0', Z10([205,380,235,378])],
  ['#f59a10', Z10([235,378,250,365,275,382])],
  ['#0a10c0', Z10([275,382,295,380])],
  ['#22cc10', Z10([295,380,310,352,340,345,365,352,395,338,410,345,430,335])]
];
const willy = runs.flatMap(r => r[1]);
p2 += '<clipPath id="wtop"><rect x="23" y="705" width="1120" height="15"/></clipPath><clipPath id="wbot"><rect x="23" y="743.500" width="1120" height="14"/></clipPath>';
p2 += poly([[23, 720], ...willy, [1143, 720]], '#4f9f4f', 'clip-path="url(#wtop)" fill-opacity="0.55"') + poly([[23, 743.5], ...willy, [1143, 743.5]], '#8a1414', 'clip-path="url(#wbot)" fill-opacity="0.55"');
p2 += seg(23, 708.7, 1143, 708.7, '#222', 1, '4 3') + seg(23, 720, 1143, 720, '#1c1c9c', 1.5) + seg(23, 732, 1143, 732, '#1c1cb8', 1.4, '6 4') + seg(23, 743.5, 1143, 743.5, '#c02020', 1.2) + seg(23, 755, 1143, 755, '#222', 1, '4 3');
runs.forEach(r => p2 += line(r[1], r[0], 3.2));
Z6([1325,395,1482,395]).concat(Z9([158,393,352,393,440,393,562,393])).forEach(q => p2 += tri(q[0], q[1], '#a80e0e', false, 5));
Z6([590,400,1412,400]).concat(Z9([88,398,300,398,422,398,545,397,825,400])).forEach(q => p2 += tri(q[0], q[1], '#1018b8', true, 5));
document.getElementById('p2').innerHTML = p2;

// ---- Awesome
const aoA = Z6([70,575,150,600,210,595,280,590,350,590,420,585,470,565,520,575,590,570,640,535,720,515,760,530,820,535,900,550,950,560,1000,535,1030,525,1100,530,1180,540,1250,565,1300,600,1360,618,1420,610,1440,580,1470,560,1500,570])
  .concat(Z9([80,568,130,562,190,578,250,585,330,562,400,572,500,578,620,572,800,578,860,560,920,558,1000,550,1050,545,1090,515,1170,485,1210,520,1240,548,1280,550,1330,535,1385,525,1440,555,1500,530]))
  .concat(Z10([40,525,70,565,100,572,160,558,230,590,290,570,340,550,430,548]));
const aoB = Z6([70,585,120,597,200,603,260,590,340,597,420,592,500,575,560,577,620,565,680,535,780,525,870,522,970,535,1030,520,1080,507,1150,515,1250,545,1300,570,1370,595,1430,600,1450,585,1500,568])
  .concat(Z9([20,570,90,580,190,572,250,578,320,565,400,565,500,578,620,573,700,575,800,578,900,565,1030,550,1090,530,1190,487,1290,530,1390,510,1500,522]))
  .concat(Z10([40,515,130,550,165,542,270,570,325,562,430,548]));
const interp = (p, x) => { for (let i = 1; i < p.length; i++) if (x <= p[i][0]) { const t = (x - p[i-1][0]) / (p[i][0] - p[i-1][0]); return p[i-1][1] + t * (p[i][1] - p[i-1][1]) } return p[p.length - 1][1] };
let p3 = grid(759, 807, [770, 785]);
const BASE = 790;
for (let m = -7; m <= 184; m++) {
  const x = tx(m), v = interp(aoA, x), prev = interp(aoA, x - 5.846);
  const c = v <= BASE ? (v <= prev ? '#1414e0' : '#ff22d8') : (v <= prev ? '#10908c' : '#e81c1c');
  p3 += rect((x - 1.3).toFixed(1), Math.min(v, BASE).toFixed(1), 2.6, Math.abs(v - BASE).toFixed(1), c);
  const sv = interp(aoB, x);
  if (v > sv) p3 += rect((x - 2.6).toFixed(1), sv.toFixed(1), 1.2, (v - sv).toFixed(1), '#ffc8d8');
}
p3 += seg(23, BASE, 1143, BASE, '#1414e0', 1.4);
p3 += bySlope(aoA, '#101018', '#c010c0', 3.4) + bySlope(aoB, '#5cf05c', '#ff9a18', 3.4);
Z6([748,525,1045,518]).concat(Z9([195,575,370,565,475,573,617,573,720,577,1192,490])).forEach(q => p3 += tri(q[0], q[1], '#f2f21e', false, 4.5));
Z6([1030,520,1432,598]).concat(Z9([247,580,440,568,545,580,685,573,808,582])).concat(Z10([325,560])).forEach(q => p3 += tri(q[0], q[1], '#1ce8e8', true, 4.5));
document.getElementById('p3').innerHTML = p3;

// ---- Barra fuerza
const Y = '#fff87a', GR = '#38f838', LB = '#b0e8fa', BK = '#5050c4', DM = '#7a1010';
const blocks = [[0,Y,[70,230,265,550,550,580,755,965,1070,1107,1125,1160,1195,1248]],[0,GR,[230,265,580,755,965,1070,1107,1125,1160,1195,1248,1335]],[0,DM,[1335,1352]],[0,LB,[1352,1422,1475,1500]],[0,BK,[1422,1475]],
  [500,LB,[0,62,1272,1412,1447,1482]],[500,Y,[62,185,203,360,413,500,535,606,658,676,711,833,868,957,1027,1044]],[500,GR,[185,203,360,413,500,535,606,658,676,711,833,868,957,1027,1044,1097]],[500,DM,[1097,1115]],[500,BK,[1115,1272,1412,1447,1482,1500]],
  [1000,BK,[0,140,190,210]],[1000,LB,[140,190,210,438]]];
let p4 = '';
blocks.forEach(([x0, c, f]) => { for (let i = 0; i < f.length; i += 2) p4 += rect((x0 + f[i] / 3).toFixed(1), 809, ((f[i + 1] - f[i]) / 3).toFixed(1), 22, c) });
p4 += rect(23, 820, 1123, 11, '#00000018');
const hBar = Z6([70,665,230,680,260,675,340,685,420,685,460,668,580,690,640,685,750,665,960,685,1000,678,1070,672,1160,665,1330,655,1352,650,1420,655,1470,645,1500,650])
  .concat(Z9([62,660,180,665,350,680,500,680,600,682,680,670,800,680,940,680,1100,650,1250,627,1272,630,1410,640,1450,640,1480,650,1500,640]))
  .concat(Z10([100,625,140,625,200,630,300,640,440,650]));
for (let m = -7; m <= 184; m++) {
  const x = tx(m), v = interp(hBar, x), prev = interp(hBar, x - 5.846);
  p4 += rect((x - 2.4).toFixed(1), v.toFixed(1), 4.8, (831 - v).toFixed(1), v <= prev ? '#2030c8' : '#c84040', 'fill-opacity="0.85" stroke="#7a2222" stroke-width="0.3"');
}
p4 += seg(23, 820, 1143, 820, '#222', 0.8);
document.getElementById('p4').innerHTML = p4;

// ---- axes
const addLabel = (id, top, y, t, cls) => {
  const el = document.createElement('span');
  el.textContent = t;
  el.className = 'absolute flex items-center tracking-[-0.3px] ' + cls;
  el.style.top = (y - top - 5.5) + 'px';
  el.style.height = '11px';
  document.getElementById(id).appendChild(el);
};
const tick = (id, top, y, c) => {
  const el = document.createElement('span');
  el.className = 'absolute left-0 w-[4px] h-[1px]';
  el.style.top = (y - top) + 'px';
  el.style.background = c;
  document.getElementById(id).appendChild(el);
};
// 155 and 150 sit behind the last-value boxes in the reference
for (let p = 170; p >= 75; p -= 5) { tick('ax0', 19, py(p), '#333'); if (p !== 150 && p !== 155) addLabel('ax0', 19, py(p), String(p), 'left-[6px] text-[#222]') }
const boxed = 'left-[3px] px-[1px] bg-white border border-[#8fa6b0] ';
[[118, '156,002', 'text-[#30c030]'], [130, '153,940', 'text-[#c02030]'], [155, '149,505', 'text-[#2020c0]']].forEach(a => { tick('ax0', 19, a[0], '#444'); addLabel('ax0', 19, a[0], a[1], boxed + a[2]) });
[[621, '100', 'text-[#222]'], [628, '91,382', 'text-[#2020c0]'], [636, '93,201', 'text-[#222]'], [642, '80', 'text-[#222]'], [661, '50', 'text-[#2020c0]'], [684, '20', 'text-[#222]'], [698, '0', 'text-[#222]']].forEach(a => { tick('ax1', 617, a[0], '#444'); addLabel('ax1', 617, a[0], a[1], boxed + a[2]) });
addLabel('ax1', 617, 652, '60', 'left-[6px] text-[#222]');
addLabel('ax1', 617, 668, '40', 'left-[6px] text-[#222]');
[[712, '-7,9158', 'text-[#30d030]'], [720, '-25', 'text-[#2020c0]'], [732, '-50', 'text-[#2020c0]'], [743, '-75', 'text-[#e02020]'], [752, '-100', 'text-[#222]']].forEach(a => { tick('ax2', 705, a[0], '#444'); addLabel('ax2', 705, a[0], a[1], boxed + a[2]) });
addLabel('ax3', 759, 768.6, '20', 'left-[6px] text-[#222]');
tick('ax3', 759, 790, '#ff22d8');
[[777, '0,0003', 'text-[#d020d0]'], [783, '6,0383', 'text-[#f09a20]'], [795, '0', 'text-[#ff22d8]']].forEach(a => { tick('ax3', 759, a[0], '#d020d0'); addLabel('ax3', 759, a[0], a[1], boxed + a[2]) });
[[814, '0,5021', 'text-[#f02020]'], [824, '0,5000', 'text-[#222]']].forEach(a => { tick('ax4', 809, a[0], '#444'); addLabel('ax4', 809, a[0], a[1], boxed + a[2]) });

const timeEl = document.getElementById('time');
for (let y = 2011; y <= 2032; y++) {
  if (y === 2017) continue;
  const el = document.createElement('span');
  el.textContent = y;
  el.className = 'absolute top-[1px] -translate-x-1/2 text-[#222]';
  el.style.left = (yearX(y) - 23) + 'px';
  timeEl.appendChild(el);
}

// ---- drawing tools
const H = (c, extra) => `<path d="M2 8h12" stroke="${c}" stroke-width="1.600"/>${extra || ''}`;
const D = c => `<path d="M2 14L14 2" stroke="${c}" stroke-width="1.400"/>`;
const K = (c, f) => `<path d="M2 8h3M9 8h6" stroke="${f}" stroke-width="1.800"/><circle cx="7" cy="8" r="2" fill="none" stroke="${f}" stroke-width="1.200"/>`;
const E = (c, f) => `<ellipse cx="8" cy="8.500" rx="6" ry="4" fill="${f}" stroke="${c}" stroke-width="1.500"/><circle cx="2" cy="12" r="1.200" fill="#1020d0"/><circle cx="14" cy="4" r="1.200" fill="#1020d0"/>`;
const MAG = '<circle cx="6.500" cy="6.500" r="4" fill="#d8e6ec" stroke="#2a2a2a" stroke-width="1.200"/><path d="M9.500 9.500L14 14" stroke="#2a2a2a" stroke-width="2"/>';
const BELL = '<path d="M8 2c3 0 4 3 4 6l2 3H2l2-3c0-3 1-6 4-6z" fill="#f2de20" stroke="#b89a10"/><circle cx="8" cy="13" r="1.500" fill="#c8a810"/>';
const tools = [
  '<path d="M5 2l7 7H8l2 5-2 1-2-5-2 2z" fill="#e8f0f4" stroke="#5a6a72"/>',
  MAG,
  '<rect x="1" y="5" width="10" height="9" fill="none" stroke="#2a5ae0" stroke-dasharray="2 1"/>' + MAG,
  BELL + '<path d="M10 1l5 5M15 1l-5 5" stroke="#2040c0"/><path d="M11 8l4 4-2 2z" fill="#fff" stroke="#555"/>',
  BELL,
  '<path d="M1 13c2-12 4-10 6-2h5" fill="none" stroke="#1030d0" stroke-width="1.400"/><text x="11" y="15" font-size="8" font-weight="bold" fill="#1030d0">F</text>',
  '<path d="M2 6h8" stroke="#e07070"/><path d="M2 9h8" stroke="#1030d0"/><text x="10" y="14" font-size="8" font-weight="bold" fill="#1030d0">F</text>',
  '<rect x="3" y="4" width="10" height="8" fill="#8fb6ea" stroke="#1030d0"/><circle cx="3" cy="12" r="1.500" fill="#1030d0"/><circle cx="13" cy="4" r="1.500" fill="#1030d0"/>',
  '<rect x="3" y="4" width="10" height="8" fill="#c8909a" stroke="#e02020" stroke-width="1.300"/><circle cx="3" cy="12" r="1.500" fill="#1030d0"/><circle cx="13" cy="4" r="1.500" fill="#1030d0"/>',
  '<path d="M3 13l8-8" stroke="#111" stroke-width="1.800"/><path d="M14 2l-6 1 5 5z" fill="#111"/><circle cx="3" cy="13" r="1.500" fill="#111"/>',
  '<rect x="2" y="2" width="12" height="12" rx="2" fill="#bcd2ea" stroke="#5a8ae0"/><text x="8" y="12" text-anchor="middle" font-size="10" font-weight="bold" fill="#111">T</text>',
  '<circle cx="8" cy="8" r="6.500" fill="#bcd8dc" stroke="#5a8ae0"/><text x="8" y="12" text-anchor="middle" font-size="10" font-weight="bold" fill="#1a8a1a">T</text>',
  '<path d="M3 13L13 3" stroke="#444" stroke-width="1.200"/><circle cx="3.500" cy="12.500" r="2" fill="none" stroke="#222"/><circle cx="12.500" cy="3.500" r="2" fill="none" stroke="#222"/>',
  K('', '#70f070'), K('', '#30c030'), K('', '#107a10'), K('', '#e01010'),
  '<path d="M2 11L11 2l3 3-9 9z" fill="#9fb0b8" stroke="#6a7a82"/><path d="M5 8l2 2M7 6l2 2M9 4l2 2" stroke="#6a7a82"/>',
  '<rect x="1" y="2" width="14" height="12" fill="#7fa89a"/><path d="M2 11l3-4 3 3 3-5 3 3" fill="none" stroke="#c06080" stroke-width="1.200"/><path d="M1 5h14" stroke="#3a8a3a" stroke-dasharray="1 1"/>',
  E('#e02020', '#c89aa8'), E('#8a5a1a', '#a8a090'), E('#108a10', '#9ac0a8'), E('#30e030', '#60e060'),
  D('#333'), D('#30b030'), D('#f01010'),
  H('#222'), H('#ff8a7a'), H('#10f010'), H('#108a10'), H('#e01010'), H('#6a9ae8'), H('#0a10a0'),
  '<path d="M8 1v14" stroke="#555" stroke-width="2"/>',
  '<path d="M1 13h12M1 13l10-10" stroke="#e06060"/><path d="M7 13a6 6 0 0 0-2-5" fill="none" stroke="#1030d0" stroke-width="1.300"/><text x="11" y="9" font-size="7" fill="#1030d0">o</text>',
  '<circle cx="8" cy="8" r="6" fill="none" stroke="#e08050" stroke-width="1.300"/><path d="M5 8h6M8 5v6" stroke="#1030d0" stroke-width="1.300"/>',
  '<g fill="#1030d0" font-size="5.500" font-weight="bold"><text x="0" y="8">3</text><text x="6" y="5">5</text><text x="11" y="4">+</text><text x="4" y="12">2</text><text x="10" y="10">4</text><text x="8" y="15">+</text></g>',
  '<path d="M2 14l5-7 3 3 4-7" fill="none" stroke="#8aa0d8"/><g fill="#1030d0" font-size="6" font-weight="bold"><text x="1" y="14">a</text><text x="10" y="6">b</text><text x="10" y="15">c</text></g>',
  '<path d="M1 9l4 5L15 2 6 10z" fill="#2ea02e" stroke="#1a701a" stroke-width="0.600"/>',
  '<path d="M1 8h3v7H1zM5 8l3-6 2 1-1 4h5l-1 8H5z" fill="#38a838" stroke="#1f7a1f" stroke-width="0.600"/>',
  '<path d="M3 3l10 10M13 3L3 13" stroke="#f01010" stroke-width="3.600"/>',
  BELL
];
document.getElementById('tools').innerHTML = tools.map((t, i) =>
  `<div class="w-[19px] h-[18.400px] shrink-0 flex items-center justify-center ${i === 0 ? 'bg-[#8ea4ae] border border-[#77909b] rounded-[2px]' : ''}"><svg width="16" height="16" viewBox="0 0 16 16" font-family="Liberation Sans, sans-serif">${t}</svg></div>`).join('');
</script>
</body>
</html>
